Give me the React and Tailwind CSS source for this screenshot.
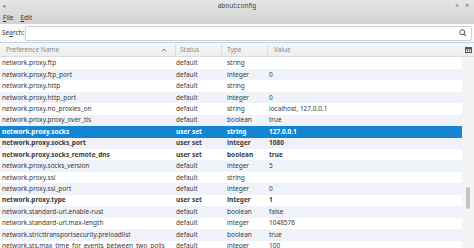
import React from 'react';

const rows = [
  ['network.proxy.ftp', 'default', 'string', ''],
  ['network.proxy.ftp_port', 'default', 'integer', '0'],
  ['network.proxy.http', 'default', 'string', ''],
  ['network.proxy.http_port', 'default', 'integer', '0'],
  ['network.proxy.no_proxies_on', 'default', 'string', 'localhost, 127.0.0.1'],
  ['network.proxy.proxy_over_tls', 'default', 'boolean', 'true'],
  ['network.proxy.socks', 'user set', 'string', '127.0.0.1', true],
  ['network.proxy.socks_port', 'user set', 'integer', '1080', true],
  ['network.proxy.socks_remote_dns', 'user set', 'boolean', 'true', true],
  ['network.proxy.socks_version', 'default', 'integer', '5'],
  ['network.proxy.ssl', 'default', 'string', ''],
  ['network.proxy.ssl_port', 'default', 'integer', '0'],
  ['network.proxy.type', 'user set', 'integer', '1', true],
  ['network.standard-url.enable-rust', 'default', 'boolean', 'false'],
  ['network.standard-url.max-length', 'default', 'integer', '1048576'],
  ['network.stricttransportsecurity.preloadlist', 'default', 'boolean', 'true'],
  ['network.sts.max_time_for_events_between_two_polls', 'default', 'integer', '100'],
];

const selected = 6;

export default function App() {
  return (
    <div className="w-[474px] h-[248px] overflow-hidden bg-white text-[#3a3a3a] text-[6.5px] leading-[10px]" style={{ fontFamily: '"Noto Sans", "Open Sans", sans-serif' }}>
      <div className="bg-gradient-to-b from-[#e6e6e6] to-[#d2d2d2]">
        <div className="h-[12px] flex items-center justify-between px-[3px]">
          <span className="text-[#555] text-[5px] w-[20px]">▾</span>
          <span className="text-[#444] text-[6.5px]">about:config</span>
          <span className="flex gap-[6px] text-[#666] text-[7px] w-[20px] justify-end pr-[2px]">
            <span>+</span>
            <span>×</span>
          </span>
        </div>
        <div className="h-[12px] flex items-center gap-[7px] px-[3px] text-[#333]">
          <span><span className="underline">F</span>ile</span>
          <span><span className="underline">E</span>dit</span>
        </div>
      </div>
      <div className="h-[18px] flex items-center px-[2px] gap-[1px] bg-[#fafafa]">
        <span>Se<span className="underline">a</span>rch:</span>
        <div className="flex-1 h-[15px] bg-white border border-[#cfcfcf] rounded-[2px] flex items-center justify-end pr-[4px]">
          <svg width="8" height="8" viewBox="0 0 10 10" fill="none" stroke="#666" strokeWidth="1.3">
            <circle cx="4" cy="4" r="3" />
            <path d="M6.3 6.3 L9 9" />
          </svg>
        </div>
      </div>
      <div className="h-[1px] bg-[#b9d4e8]" />
      <div className="flex">
        <div className="flex-1 min-w-0">
          <div className="h-[14px] flex items-center bg-gradient-to-b from-[#f7f7f7] to-[#ededed] border-b border-[#dcdcdc] text-[#8a8a8a]">
            <div className="w-[176px] flex items-center justify-between pl-[6px] pr-[8px] border-r border-[#dcdcdc] h-[10px]">
              <span>Preference Name</span>
              <svg width="6" height="4" viewBox="0 0 6 4" fill="none" stroke="#777" strokeWidth="0.9"><path d="M0.8 3.3 L3 1 L5.2 3.3" /></svg>
            </div>
            <div className="w-[46px] pl-[4px] border-r border-[#dcdcdc] h-[10px] flex items-center">Status</div>
            <div className="w-[46px] pl-[5px] border-r border-[#dcdcdc] h-[10px] flex items-center">Type</div>
            <div className="flex-1 pl-[6px] h-[10px] flex items-center">Value</div>
          </div>
          <div className="pt-[0.5px]">
            {rows.map((r, i) => (
              <div
                key={r[0]}
                className={`h-[11.45px] flex items-center ${i === selected ? 'bg-[#1485d2] text-white' : i % 2 === 1 ? 'bg-[#eff2f8]' : 'bg-white'} ${r[4] ? 'font-bold' : ''}`}
              >
                <div className="w-[176px] pl-[2px] whitespace-nowrap">{r[0]}</div>
                <div className="w-[46px]">{r[1]}</div>
                <div className="w-[46px] pl-[5px]">{r[2]}</div>
                <div className="flex-1 pl-[1px]">{r[3]}</div>
              </div>
            ))}
          </div>
        </div>
        <div className="w-[12px] flex flex-col">
          <div className="h-[14px] bg-gradient-to-b from-[#f7f7f7] to-[#ededed] border-b border-[#dcdcdc] flex items-center justify-center">
            <svg width="7" height="6" viewBox="0 0 7 6">
              <rect x="0.5" y="0.5" width="6" height="5" fill="none" stroke="#555" />
              <rect x="0.5" y="0.5" width="6" height="2" fill="#555" />
              <rect x="2" y="3" width="1" height="1.5" fill="#555" />
              <rect x="4" y="3" width="1" height="1.5" fill="#555" />
            </svg>
          </div>
          <div className="flex-1 bg-[#f4f4f4] pt-[130px] flex justify-center">
            <div className="w-[4px] h-[22px] bg-[#c4c4c4] rounded-full" />
          </div>
        </div>
      </div>
    </div>
  );
}
